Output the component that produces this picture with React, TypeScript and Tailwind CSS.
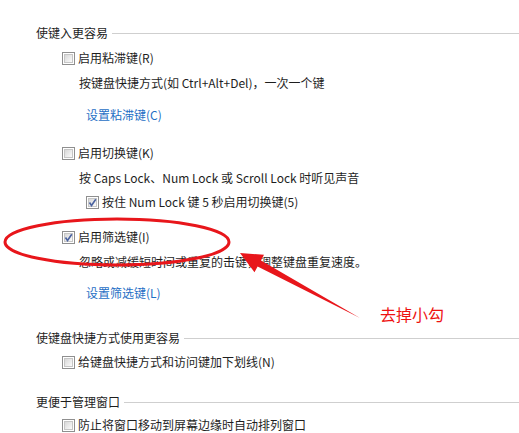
import React from 'react';

const font = { fontFamily: '"Noto Sans CJK SC", "Microsoft YaHei", sans-serif' };

function Box({ checked }: { checked?: boolean }) {
  return (
    <div className="relative w-[13px] h-[13px] shrink-0 border border-[#8f8f8f] bg-white p-[1px]">
      <div className="w-full h-full bg-gradient-to-br from-[#d8d8d8] to-[#fbfbfb] border border-[#c6c6c6]"></div>
      {checked && (
        <svg className="absolute inset-0" width="11" height="11" viewBox="0 0 11 11">
          <path d="M2.5 5.5 L4.5 8.5 L8.8 2.2" fill="none" stroke="#4b63a0" strokeWidth="1.6" />
        </svg>
      )}
    </div>
  );
}

function Header({ text, mt }: { text: string; mt: string }) {
  return (
    <div className={`flex items-center h-5 pl-9 ${mt}`}>
      <span className="text-[12px] text-[#1e1e1e] whitespace-nowrap">{text}</span>
      <div className="flex-1 h-px bg-[#cfcfcf] ml-1"></div>
    </div>
  );
}

function Check({ label, checked, indent, mt }: { label: string; checked?: boolean; indent: string; mt: string }) {
  return (
    <div className={`flex items-center h-5 gap-[3px] ${indent} ${mt}`}>
      <Box checked={checked} />
      <span className="text-[12px] text-[#1e1e1e] whitespace-nowrap">{label}</span>
    </div>
  );
}

function Line({ text, mt, link }: { text: string; mt: string; link?: boolean }) {
  return (
    <div className={`flex items-center h-5 ${link ? 'pl-[86px] text-[#1f6fc5]' : 'pl-[79px] text-[#1e1e1e]'} ${mt}`}>
      <span className="text-[12px] whitespace-nowrap">{text}</span>
    </div>
  );
}

export default function App() {
  return (
    <div className="relative w-[519px] h-[433px] bg-white overflow-hidden" style={font}>
      <div className="flex flex-col">
        <Header text="使键入更容易" mt="mt-[23px]" />
        <Check label="启用粘滞键(R)" indent="pl-[62px]" mt="mt-[5px]" />
        <Line text="按键盘快捷方式(如 Ctrl+Alt+Del)，一次一个键" mt="mt-[5px]" />
        <Line text="设置粘滞键(C)" link mt="mt-[12px]" />
        <Check label="启用切换键(K)" indent="pl-[62px]" mt="mt-[18px]" />
        <Line text="按 Caps Lock、Num Lock 或 Scroll Lock 时听见声音" mt="mt-[5px]" />
        <Check label="按住 Num Lock 键 5 秒启用切换键(5)" checked indent="pl-[86px]" mt="mt-[4px]" />
        <Check label="启用筛选键(I)" checked indent="pl-[62px]" mt="mt-[15px]" />
        <Line text="忽略或减缓短时间或重复的击键，调整键盘重复速度。" mt="mt-[5px]" />
        <Line text="设置筛选键(L)" link mt="mt-[11px]" />
        <Header text="使键盘快捷方式使用更容易" mt="mt-[25px]" />
        <Check label="给键盘快捷方式和访问键加下划线(N)" indent="pl-[62px]" mt="mt-[4px]" />
        <Header text="更便于管理窗口" mt="mt-[20px]" />
        <Check label="防止将窗口移动到屏幕边缘时自动排列窗口" indent="pl-[62px]" mt="mt-[3px]" />
      </div>

      {/* annotation overlay */}
      <svg className="absolute inset-0 pointer-events-none" width="519" height="433" viewBox="0 0 519 433">
        <ellipse cx="117" cy="242" rx="112" ry="23" fill="none" stroke="#e8161b" strokeWidth="3" />
        <path d="M360 318 L257.6 266.6 L254.5 272.3 L240 253 L264 254.7 L261 260.4 Z" fill="#e8161b" />
      </svg>
      <div className="absolute left-[380px] top-[302px] text-[16px] text-[#ee1111]">去掉小勾</div>
    </div>
  );
}
